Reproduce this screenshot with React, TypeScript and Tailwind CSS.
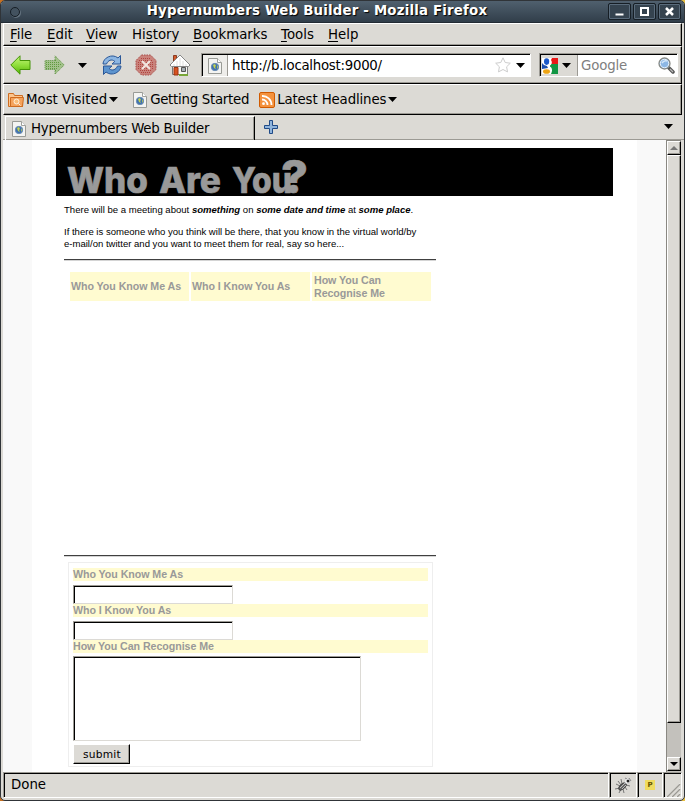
import type { ReactNode } from "react";

const UI = "font-['DejaVu_Sans',sans-serif]";

function Caret({ className = "" }: { className?: string }) {
  return (
    <svg className={"shrink-0 " + className} width="9" height="5" viewBox="0 0 9 5">
      <path d="M0 0h9L4.5 5z" fill="#000" />
    </svg>
  );
}

function PageIcon() {
  return (
    <svg className="shrink-0" width="14" height="16" viewBox="0 0 14 16">
      <path d="M.5.5h9l4 4v11H.5z" fill="#f4f4f2" stroke="#999b96" />
      <path d="M9.500.5v4h4" fill="#fff" stroke="#a0a19d" />
      <circle cx="7" cy="9" r="3.700" fill="#3f70b0" stroke="#6d8fb5" />
      <path d="M5 7l2-1 1 2-1 1 1 2-2-1zM9 7l1 2-1 2z" fill="#c4d34e" />
    </svg>
  );
}

function ArrowIcon({ forward = false }: { forward?: boolean }) {
  return (
    <svg className={"shrink-0 " + (forward ? "-scale-x-100" : "")} width="21" height="20" viewBox="0 0 21 20">
      <defs>
        <linearGradient id="green" x2="0" y2="1">
          <stop stopColor="#c5f57e" />
          <stop offset=".5" stopColor="#91df3c" />
          <stop offset="1" stopColor="#56b507" />
        </linearGradient>
      </defs>
      {forward ? (
        <>
          <path d="M.8 10L10 .8v4.700h10v9H10v4.700z" fill="#a3c18b" />
          <path d="M.8 10L10 .8v4.700h10v9H10v4.700z" fill="none" stroke="#5c9140" strokeDasharray="1 1" />
          <path d="M4 9.500h16M6 7.500h14M6 11.500h14M8 13.500h12M9 5.500h1M9 15.500h1" stroke="#5f9a3d" strokeDasharray="1 1" />
        </>
      ) : (
        <path d="M.8 10L10 .8v4.700h10v9H10v4.700z" fill="url(#green)" stroke="#459408" />
      )}
    </svg>
  );
}

function ReloadIcon() {
  return (
    <svg className="shrink-0" width="20" height="20" viewBox="0 0 20 20" fill="#8db6e2" stroke="#2b5797">
      <path d="M1 9C1 3 10-2 16 3l2.500-2.500V9H10l2.800-2.600C9.500 3.500 6 5.500 4.500 9z" />
      <path d="M19 11c0 6-9 11-15 6l-2.500 2.500V11H10l-2.800 2.600c3.300 2.900 6.800.9 8.300-2.600z" fill="#5d94ce" />
    </svg>
  );
}

function StopIcon() {
  return (
    <svg className="shrink-0" width="22" height="22" viewBox="0 0 22 22">
      <path d="M6.500 1h9L21 6.500v9L15.500 21h-9L1 15.500v-9z" fill="#c9827b" stroke="#a84c48" strokeDasharray="1.500 1" />
      <path d="M6 4.500h10M4 6.500h14M3 8.500h16M3 10.500h16M3 12.500h16M3 14.500h16M5 16.500h12M6 18.500h10" stroke="#b04440" strokeDasharray="1 1" />
      <path d="M7 7l8 8M15 7l-8 8" stroke="#f2e6e1" strokeWidth="2" />
    </svg>
  );
}

function HomeIcon() {
  return (
    <svg className="shrink-0" width="22" height="22" viewBox="0 0 22 22">
      <path d="M4.500 1.500h3v6h-3z" fill="#d45a2c" stroke="#8a3b20" />
      <path d="M3.500 9h15v11.500h-15z" fill="#f5f5f3" stroke="#777" />
      <path d="M11 1L1 11l1.500 1.500h17L21 11z" fill="#fff" stroke="#888" />
      <path d="M11 4v8M8 7v5M14 7v5M5 10v2M17 10v2" stroke="#ddd" />
      <path d="M5 13.500h4V21H5z" fill="#d85220" stroke="#983413" />
      <path d="M12.500 13.500h4v4h-4z" fill="#a8b0b5" stroke="#555" />
      <path d="M10 21h9" stroke="#78a638" strokeWidth="2" />
    </svg>
  );
}

function FolderIcon() {
  return (
    <svg className="shrink-0" width="16" height="15" viewBox="0 0 16 15" fill="none" stroke="#ce6c20">
      <path d="M.5 14.500v-13h5l1 2h8v11z" fill="#fcc58e" />
      <path d="M2.500 14.500v-9h13l-1 9z" fill="#f5a35c" />
      <circle cx="8.500" cy="9.500" r="2.500" fill="#f9bd7a" stroke="#fff1dc" />
      <path d="M10.500 11.500l2 2" stroke="#fff1dc" />
    </svg>
  );
}

function FeedIcon() {
  return (
    <svg className="shrink-0" width="16" height="16" viewBox="0 0 16 16" fill="none">
      <rect x=".5" y=".5" width="15" height="15" rx="1.500" fill="#f4923e" stroke="#d05a00" />
      <circle cx="4.500" cy="11.700" r="1.400" fill="#fff" />
      <path d="M3 7.500a5.500 5.500 0 0 1 5.500 5.500M3 4a9 9 0 0 1 9.500 9" stroke="#fff" strokeWidth="1.800" />
    </svg>
  );
}

function GoogleIcon() {
  return (
    <svg className="shrink-0" width="16" height="16" viewBox="0 0 16 16">
      <path d="M0 0h16v16H0z" fill="#fff" />
      <path d="M8 0h8v6H8z" fill="#e91818" />
      <path d="M8 6h8v10H8z" fill="#129644" />
      <ellipse cx="5" cy="4" rx="3.700" ry="4.500" fill="#fff" />
      <path d="M7 0h3L9 2c2 3 0 5-2 6 3 1 4 4 2 8H1c-2-2 0-5 3-5z" fill="#fff" />
      <ellipse cx="4.600" cy="3.600" rx="2.600" ry="3.300" fill="#1b58c8" />
      <ellipse cx="4.500" cy="13.500" rx="3.500" ry="2.300" fill="#eda414" />
      <path d="M0 5q2 3 5 3l1 2-6 1z" fill="#1d4fae" />
    </svg>
  );
}

function SearchIcon() {
  return (
    <svg className="shrink-0" width="17" height="17" viewBox="0 0 17 17" fill="none">
      <path d="M10.500 10.500l4.500 4.500" stroke="#555" strokeWidth="3.500" strokeLinecap="round" />
      <path d="M12 12l3 3" stroke="#bbb" strokeWidth="1.200" />
      <circle cx="6.500" cy="6.500" r="5.500" fill="#8cb7e5" stroke="#888a85" strokeWidth="1.300" />
      <circle cx="6.500" cy="6.500" r="4.200" stroke="#e4effa" />
      <path d="M4 6q2-3 5-2" stroke="#d5e8fa" strokeWidth="1.500" />
    </svg>
  );
}

function BugIcon() {
  return (
    <svg width="17" height="17" viewBox="0 0 17 17" fill="none" stroke="#777">
      <path d="M1 7l4 2M0 12l5-1M4 16l2-4M9 16l-1-4M6 2l1 5M12 13l-2-3M15 9l-4-1M3 4l3 4" />
      <ellipse cx="7.500" cy="9.500" rx="4.500" ry="2.300" transform="rotate(-43 7.500 9.500)" fill="#666" stroke="#444" />
      <path d="M5 11l5-5M7 12l4-4" stroke="#bbb" />
      <circle cx="12.500" cy="4" r="2.800" fill="#fff" stroke="#ccc" />
      <circle cx="13" cy="4" r="1.500" fill="#222" stroke="none" />
      <path d="M10 1l2 1M14 1l2 3" stroke="#888" />
    </svg>
  );
}

function Bar({ className, children }: { className: string; children: ReactNode }) {
  return (
    <div className={"flex w-[679px] shrink-0 items-center border-t border-r border-b border-l border-t-white border-r-black border-b-black border-l-white shadow-[inset_-1px_-1px_0_#9c9a94] " + className}>
      {children}
    </div>
  );
}

function MenuItem({ pre = "", hot, post, className }: { pre?: string; hot: string; post: string; className: string }) {
  return (
    <span className={"shrink-0 whitespace-pre " + className}>
      {pre}
      <span className="underline decoration-1 underline-offset-2">{hot}</span>
      {post}
    </span>
  );
}

function WindowButton({ children }: { children: ReactNode }) {
  return (
    <div className="flex h-[17px] w-[23px] items-center justify-center rounded-[2px] border border-[#161e25] bg-[#35434f] shadow-[inset_0_0_0_1px_#5a6b7b]">
      <svg width="11" height="11" viewBox="0 0 11 11" fill="none" stroke="#fff" strokeWidth="2">{children}</svg>
    </div>
  );
}

function Rule() {
  return <div className="h-[2px] w-[372px] border-t border-t-[#404040] border-b border-b-[#d4d4d4]" />;
}

function Label({ children }: { children: ReactNode }) {
  return <div className="h-[13px] w-[355px] bg-[#fffbd0] text-[10.67px] leading-[13px] font-bold tracking-[-0.06px] whitespace-nowrap text-[#999]">{children}</div>;
}

const sunken = "block resize-none border border-t-[#9c9a94] border-l-[#9c9a94] border-r-[#dcdad5] border-b-[#dcdad5] bg-white shadow-[inset_1px_1px_0_#000] outline-none";

function StatusCell({ className, children }: { className: string; children?: ReactNode }) {
  return (
    <div className={"flex h-[26px] shrink-0 items-center border border-t-[#9c9a94] border-l-[#9c9a94] border-r-white border-b-white shadow-[inset_1px_1px_0_#000] " + className}>
      {children}
    </div>
  );
}

export default function App() {
  return (
    <div className="h-[801px] w-[685px] overflow-hidden bg-[linear-gradient(90deg,#c87020_50%,#e8c040_50%)]">
      <div className={"flex h-[801px] w-[685px] flex-col overflow-hidden rounded-[5px] border border-[#303438] bg-[#dcdad5] text-[13.33px] leading-[16px] text-black " + UI}>
        <header className="-mx-px -mt-px flex h-[23px] shrink-0 items-center rounded-t-[5px] border-t border-b border-t-[#20272e] border-b-[#222b34] bg-linear-to-b from-[#50606e] to-[#313e4a] pr-[4px] pl-[10px]">
          <div className="size-[10px] rounded-full border border-[#161e25] bg-[#43525f] shadow-[1px_1px_0_#63727f]" />
          <h1 className="-mt-[2px] flex-1 pl-[6px] text-center text-[13.33px] font-bold tracking-[0.2px] whitespace-nowrap text-white [text-shadow:1px_1px_1px_#000]">Hypernumbers Web Builder - Mozilla Firefox</h1>
          <div className="flex gap-[2px]">
            <WindowButton><path d="M1.500 8.500h8" /></WindowButton>
            <WindowButton><path d="M2 2h7v7H2z" /></WindowButton>
            <WindowButton><path d="M2 2l7 7M9 2l-7 7" strokeWidth="2.500" /></WindowButton>
          </div>
        </header>

        <div className="flex min-h-0 flex-1 flex-col pl-[2px]">
          <Bar className="h-[23px]">
            <MenuItem hot="F" post="ile" className="ml-[6px] w-[37px]" />
            <MenuItem hot="E" post="dit" className="w-[39px]" />
            <MenuItem hot="V" post="iew" className="w-[46px]" />
            <MenuItem pre="Hi" hot="s" post="tory" className="w-[61px]" />
            <MenuItem hot="B" post="ookmarks" className="w-[88px]" />
            <MenuItem hot="T" post="ools" className="w-[47px]" />
            <MenuItem hot="H" post="elp" className="" />
          </Bar>

          <Bar className="h-[38px] pr-[2px] pl-[6px]">
            <ArrowIcon />
            <div className="ml-[13px] flex"><ArrowIcon forward /></div>
            <Caret className="ml-[13px]" />
            <div className="ml-[15px] flex"><ReloadIcon /></div>
            <div className="ml-[13px] flex"><StopIcon /></div>
            <div className="ml-[12px] flex"><HomeIcon /></div>
            <div className="ml-[10px] flex h-[24px] w-[330px] shrink-0 items-center border border-t-[#9c9a94] border-r-white border-b-white border-l-[#9c9a94] bg-white pl-px shadow-[inset_1px_1px_0_#000]">
              <div className="mt-px flex h-[21px] w-[25px] items-center justify-center border-r border-[#9c9a94] bg-[#eeedea]"><PageIcon /></div>
              <span className="mt-px pl-[4px] tracking-[-0.27px]">http://b.localhost:9000/</span>
              <svg className="ml-auto" width="16" height="16" viewBox="0 0 16 16">
                <path d="M8 .8l2.200 4.700 5.100.7-3.700 3.600.9 5.100L8 12.500l-4.500 2.400.9-5.100L.7 6.200l5.100-.7z" fill="#fff" stroke="#ccc" />
              </svg>
              <Caret className="mr-[5px] ml-[5px]" />
            </div>
            <div className="ml-[8px] flex h-[24px] w-[139px] shrink-0 items-center border border-t-[#9c9a94] border-r-white border-b-white border-l-[#9c9a94] bg-white pl-px shadow-[inset_1px_1px_0_#000]">
              <div className="mt-px flex h-[21px] w-[37px] items-center gap-[4px] border-r border-[#9c9a94] bg-[#dcdad5] pl-[1px]"><GoogleIcon /><Caret /></div>
              <span className="mt-px pl-[3px] tracking-[-0.15px] text-[#808080]">Google</span>
              <div className="mr-[2px] ml-auto flex"><SearchIcon /></div>
            </div>
          </Bar>

          <Bar className="h-[31px] pl-[4px]">
            <FolderIcon />
            <span className="ml-[2px]">Most Visited</span>
            <Caret className="ml-[2px]" />
            <div className="ml-[15px] flex"><PageIcon /></div>
            <span className="ml-[3px] w-[99px] tracking-[-0.27px] whitespace-nowrap">Getting Started</span>
            <div className="ml-[10px] flex"><FeedIcon /></div>
            <span className="ml-[2px] tracking-[-0.13px]">Latest Headlines</span>
            <Caret className="ml-[2px]" />
          </Bar>

          <div className="flex h-[25px] shrink-0 border-b border-[#9c9a94]">
            <div className="mt-px ml-[2px] flex h-[24px] w-[250px] shrink-0 items-center border-t border-r border-l border-t-white border-r-black border-l-white pl-[6px] shadow-[inset_-1px_0_0_#9c9a94]">
              <PageIcon />
              <span className="ml-[5px] tracking-[-0.22px]">Hypernumbers Web Builder</span>
            </div>
            <svg className="mt-[5px] ml-[9px]" width="14" height="14" viewBox="0 0 14 14">
              <path d="M5.500.5h3v5h5v3h-5v5h-3v-5h-5v-3h5z" fill="#8fb4dc" stroke="#204a87" />
            </svg>
            <Caret className="mt-[9px] mr-[11px] ml-auto" />
          </div>

          <div className="flex h-[632px] shrink-0 font-['Liberation_Sans',Arial,sans-serif]">
            <div className="flex w-[663px] shrink-0 bg-[#f9f9f9] pl-[29px]">
              <main className="w-[605px] bg-white pt-[8px] pl-[24px]">
                <div className="h-[48px] w-[557px] bg-black">
                  <svg width="557" height="48" viewBox="0 0 557 48" className="block overflow-visible font-['Inter',sans-serif] font-extrabold" fill="#999" stroke="#999" strokeWidth=".6">
                    <text x="11" y="44.500" fontSize="35.500" textLength="81" lengthAdjust="spacingAndGlyphs">Who</text>
                    <text x="103" y="44.500" fontSize="35.500" textLength="62" lengthAdjust="spacingAndGlyphs">Are</text>
                    <text x="176" y="44.500" fontSize="35.500" textLength="60" lengthAdjust="spacingAndGlyphs">You</text>
                    <text x="225" y="44.500" fontSize="45" textLength="27" lengthAdjust="spacingAndGlyphs">?</text>
                  </svg>
                </div>
                <div className="pl-[8px] text-[9.55px] leading-[12px]">
                  <p className="pt-[8px] whitespace-nowrap">
                    There will be a meeting about <b><i>something</i></b> on <b><i>some date and time</i></b> at <b><i>some place</i></b>.
                  </p>
                  <p className="pt-[10px] pb-[9px] whitespace-nowrap">
                    If there is someone who you think will be there, that you know in the virtual world/by
                    <br />
                    e-mail/on twitter and you want to meet them for real, say so here...
                  </p>
                  <Rule />
                  <div className="mt-[11px] ml-[6px] flex h-[29px] gap-[2px] text-[10.67px] leading-[13px] font-bold tracking-[-0.06px] text-[#999]">
                    <div className="flex w-[119px] items-center bg-[#fffbd0] pl-px whitespace-nowrap">Who You Know Me As</div>
                    <div className="flex w-[119px] items-center bg-[#fffbd0] pl-px whitespace-nowrap">Who I Know You As</div>
                    <div className="flex w-[119px] items-center bg-[#fffbd0] pl-[2px]">How You Can<br />Recognise Me</div>
                  </div>
                  <div className="h-[254px]" />
                  <Rule />
                  <form className="mt-[5px] ml-[4px] h-[205px] w-[365px] border border-[#eee] pt-[5px] pl-[4px]">
                    <Label>Who You Know Me As</Label>
                    <input className={"mt-[4px] h-[19px] w-[160px] " + sunken} />
                    <Label>Who I Know You As</Label>
                    <input className={"mt-[4px] h-[19px] w-[160px] " + sunken} />
                    <Label>How You Can Recognise Me</Label>
                    <textarea className={"mt-[3px] h-[85px] w-[288px] " + sunken} />
                    <button type="button" className="mt-[3px] block h-[20px] w-[57px] border border-t-white border-r-black border-b-black border-l-white bg-[#dcdad5] pt-px pl-px font-['DejaVu_Sans',sans-serif] text-[10.67px] leading-[16px] tracking-[0.2px] shadow-[inset_-1px_-1px_0_#9c9a94]">submit</button>
                  </form>
                </div>
              </main>
            </div>
            <div className="flex w-[15px] flex-col border-t border-l border-[#8a8882] bg-[#c3c1bc]">
              <div className="flex h-[14px] items-center justify-center border border-t-white border-r-black border-b-black border-l-white bg-[#dcdad5] shadow-[inset_-1px_-1px_0_#9c9a94]">
                <svg width="8" height="4" viewBox="0 0 8 4"><path d="M0 4h8L4 0z" fill="#777" /></svg>
              </div>
              <div className="h-[568px] border border-t-white border-r-black border-b-black border-l-white bg-[#dcdad5] shadow-[inset_-1px_-1px_0_#9c9a94]" />
              <div className="mt-auto mb-px flex h-[14px] items-center justify-center border border-t-white border-r-black border-b-black border-l-white bg-[#dcdad5] shadow-[inset_-1px_-1px_0_#9c9a94]">
                <svg width="8" height="4" viewBox="0 0 8 4"><path d="M0 0h8L4 4z" fill="#000" /></svg>
              </div>
            </div>
          </div>

          <footer className="flex shrink-0">
            <StatusCell className="w-[606px] pl-[7px]">Done</StatusCell>
            <StatusCell className="w-[28px] justify-center"><BugIcon /></StatusCell>
            <StatusCell className="w-[26px] justify-center">
              <div className="flex size-[10px] items-center justify-center bg-[#f0dc60] text-[7px] leading-none font-bold text-[#665500]">P</div>
            </StatusCell>
            <StatusCell className="w-[19px] justify-end">
              <svg className="mt-[8px]" width="16" height="16" viewBox="0 0 16 16">
                <path d="M1 16L15 2M6 16l9-9M11 16l4-4" stroke="#fff" />
                <path d="M2 16L15 3M7 16l8-8M12 16l3-3" stroke="#9c9a94" strokeWidth="1.500" />
              </svg>
            </StatusCell>
          </footer>
        </div>
      </div>
    </div>
  );
}
